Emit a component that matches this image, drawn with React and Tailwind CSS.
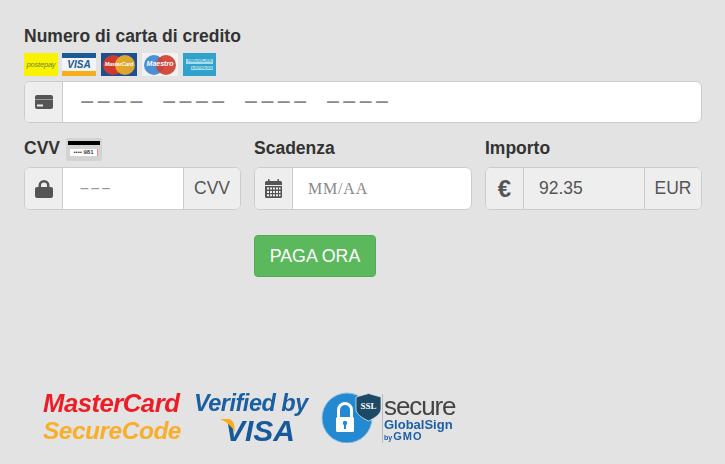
const sans = "font-['Liberation_Sans',Arial,sans-serif]";
const mono = "font-['Liberation_Mono','Courier_New',monospace]";
const serif = "font-['Liberation_Serif','Times_New_Roman',serif]";

function CardIcon() {
  return (
    <svg width="18" height="14" viewBox="0 0 18 14" className="text-[#555]">
      <path
        fill="currentColor"
        fillRule="evenodd"
        d="M2 0h14a2 2 0 0 1 2 2v10a2 2 0 0 1-2 2H2a2 2 0 0 1-2-2V2a2 2 0 0 1 2-2zM2 9.5v2h6v-2z"
      />
      <rect x="0" y="4" width="18" height="1" fill="#eee" opacity="0.45" />
    </svg>
  );
}

function LockIcon() {
  return (
    <svg width="18" height="18" viewBox="0 0 18 18" className="text-[#555]">
      <path
        fill="currentColor"
        fillRule="evenodd"
        d="M3.500 7V5.500a5.500 5.500 0 0 1 11 0V7H16a2 2 0 0 1 2 2v7a2 2 0 0 1-2 2H2a2 2 0 0 1-2-2V9a2 2 0 0 1 2-2zM6 7h6V5.500a3 3 0 0 0-6 0z"
      />
    </svg>
  );
}

function CalendarIcon() {
  return (
    <svg width="17" height="19" viewBox="0 0 17 19" className="text-[#555]">
      <path fill="currentColor" d="M1.500 2H3V0.800a.8.8 0 0 1 1.600 0V2h7.800V0.800a.8.8 0 0 1 1.600 0V2h1.500A1.500 1.500 0 0 1 17 3.500V6H0V3.500A1.500 1.500 0 0 1 1.500 2z" />
      <path
        fill="currentColor"
        fillRule="evenodd"
        d="M0 7h17v10.500a1.500 1.500 0 0 1-1.500 1.500h-14A1.500 1.500 0 0 1 0 17.500zm2 1.500v2h2v-2zm3 0v2h2v-2zm3 0v2h2v-2zm3 0v2h2v-2zm3 0v2h1.500v-2zM2 12v2h2v-2zm3 0v2h2v-2zm3 0v2h2v-2zm3 0v2h2v-2zm3 0v2h1.500v-2zM2 15.300v2h2v-2zm3 0v2h2v-2zm3 0v2h2v-2zm3 0v2h2v-2zm3 0v2h1.500v-2z"
      />
    </svg>
  );
}

function Postepay() {
  return (
    <div className="flex h-[23px] w-[34px] items-center justify-center bg-[#f9f200] text-[7.5px] italic tracking-[-0.2px] text-[#6b8a3a]">
      postepay
    </div>
  );
}

function VisaCard() {
  return (
    <div className="flex h-[23px] w-[34px] flex-col bg-[#f4f4f4]">
      <div className="h-[5px] bg-[#1a5a96]" />
      <div className="flex flex-1 items-center justify-center text-[10px] font-bold italic leading-none text-[#1a5a96]">
        VISA
      </div>
      <div className="h-[5px] bg-[#f7ae1a]" />
    </div>
  );
}

function Circles({ left, right, label, size }) {
  return (
    <div className="relative h-[20px] w-[32px]">
      <svg width="32" height="20" viewBox="0 0 32 20" className="absolute inset-0">
        <circle cx="10" cy="10" r="10" fill={left} />
        <circle cx="22" cy="10" r="10" fill={right} opacity="0.92" />
      </svg>
      <span className={`absolute inset-0 flex items-center justify-center font-bold italic text-white ${size}`}>
        {label}
      </span>
    </div>
  );
}

function Amex() {
  return (
    <div className="flex h-[23px] w-[33px] flex-col justify-center gap-[2px] bg-[#2fa3cc] px-[3px] text-[4.500px] font-bold leading-none text-[#2fa3cc]">
      <span className="bg-[#a8dcec] text-center">AMERICAN</span>
      <span className="ml-[5px] bg-[#a8dcec] text-center">EXPRESS</span>
    </div>
  );
}

function Addon({ children, side = "left", wide = false }) {
  const border = side === "left" ? "border-r" : "border-l";
  return (
    <div className={`flex shrink-0 items-center justify-center border-[#ccc] bg-[#eee] text-[#555] ${border} ${wide ? "w-[57px]" : "w-[38px]"}`}>
      {children}
    </div>
  );
}

function Group({ children, className = "" }) {
  return (
    <div className={`flex overflow-hidden rounded-[6px] border border-[#ccc] bg-white ${className}`}>
      {children}
    </div>
  );
}

function Field({ label, extra, width, children }) {
  return (
    <div className={`flex flex-col ${width}`}>
      <div className="mb-[2px] flex h-[32px] items-center gap-[6px] text-[17.500px] font-bold leading-none text-[#333]">
        {label}
        {extra}
      </div>
      {children}
    </div>
  );
}

function CvvCard() {
  return (
    <div className="flex h-[23px] w-[36px] flex-col items-center rounded-[2px] bg-[#d3d3d3] pt-[3px]">
      <div className="h-[4px] w-[32px] bg-black" />
      <div className="mt-[4px] flex h-[7px] w-[28px] items-center justify-center border-r border-[#e88] bg-white text-[6px] font-bold leading-none text-[#444]">
        •••• 981
      </div>
    </div>
  );
}

function ShieldLock() {
  return (
    <svg width="61" height="52" viewBox="0 0 61 52" className="shrink-0">
      <circle cx="26" cy="27" r="25" fill="#2389d0" />
      <circle cx="26" cy="27" r="25" fill="none" stroke="#8fc0e4" strokeWidth="1" />
      <path d="M17.500 27v-8a6.500 6.500 0 0 1 13 0v8" fill="none" stroke="#fff" strokeWidth="3" />
      <rect x="15" y="26" width="18" height="15" rx="1.500" fill="#fff" />
      <circle cx="24" cy="32" r="2.200" fill="#2389d0" />
      <rect x="23" y="33" width="2" height="5" fill="#2389d0" />
      <path d="M35 6l12.500-3.500L60 6v12c0 5-6 9-12.500 12C41 27 35 23 35 18z" fill="#1c4a66" stroke="#e3e3e3" strokeWidth="0.8" />
      <text x="47.500" y="18" textAnchor="middle" fontSize="9" fontWeight="700" fill="#fff" fontFamily="Liberation Serif, serif">
        SSL
      </text>
    </svg>
  );
}

export default function App() {
  return (
    <div className={`flex h-[464px] w-[725px] flex-col overflow-hidden bg-[#e3e3e3] pl-6 pr-[23px] pt-[22px] ${sans}`}>
      <div className="flex h-[30px] items-center text-[17.500px] font-bold leading-none text-[#333]">
        Numero di carta di credito
      </div>
      <div className="mt-px flex items-center">
        <Postepay />
        <div className="ml-[4px]">
          <VisaCard />
        </div>
        <div className="ml-[5px] flex h-[23px] w-[36px] items-center justify-center bg-[#1f4f93]">
          <Circles left="#cf3a2e" right="#eeae25" label="MasterCard" size="text-[5.500px] tracking-[-0.2px]" />
        </div>
        <div className="ml-[5px] flex h-[23px] w-[36px] items-center justify-center bg-[#f1f1f1]">
          <Circles left="#4b8fd6" right="#cf4030" label="Maestro" size="text-[7px]" />
        </div>
        <div className="ml-[5px]">
          <Amex />
        </div>
      </div>

      <Group className="mt-[5px] h-[42px] w-[678px]">
        <Addon>
          <CardIcon />
        </Addon>
        <div className={`flex flex-1 items-center pl-[16px] text-[27.300px] text-[#888] ${mono}`}>
          ––––&nbsp;––––&nbsp;––––&nbsp;––––
        </div>
      </Group>

      <div className="mt-[10px] flex">
        <Field label="CVV" extra={<CvvCard />} width="w-[217px]">
          <Group className="h-[43px]">
            <Addon>
              <LockIcon />
            </Addon>
            <div className={`flex flex-1 items-center pl-[16px] text-[18px] text-[#999] ${mono}`}>–––</div>
            <Addon side="right" wide>
              <span className="text-[17.500px]">CVV</span>
            </Addon>
          </Group>
        </Field>
        <div className="ml-[13px]">
          <Field label="Scadenza" width="w-[218px]">
            <Group className="h-[43px]">
              <Addon>
                <CalendarIcon />
              </Addon>
              <div className={`flex flex-1 items-center pl-[15px] text-[16px] tracking-[0.8px] text-[#888] ${serif}`}>MM/AA</div>
            </Group>
          </Field>
        </div>
        <div className="ml-[13px]">
          <Field label="Importo" width="w-[217px]">
            <Group className="h-[43px]">
              <Addon>
                <span className="text-[24px] font-bold leading-none">€</span>
              </Addon>
              <div className="flex flex-1 items-center bg-[#eee] pl-[15px] text-[17.500px] text-[#555]">92.35</div>
              <Addon side="right" wide>
                <span className="text-[17.500px]">EUR</span>
              </Addon>
            </Group>
          </Field>
        </div>
      </div>

      <div className="mt-[25px] pl-[230px]">
        <button
          type="button"
          className="flex h-[42px] w-[122px] items-center justify-center rounded-[4px] border border-[#4cae4c] bg-[#5cb85c] text-[17.800px] text-white"
        >
          PAGA ORA
        </button>
      </div>

      <div className="mt-[113px] flex items-center pl-[19px]">
        <div className="flex w-[151px] shrink-0 flex-col font-bold italic leading-[27px] tracking-[-0.5px] blur-[0.3px]">
          <span className="text-[25.700px] text-[#ee1c25]">MasterCard</span>
          <span className="text-[24.500px] text-[#f9ae2a]">SecureCode</span>
        </div>
        <div className="relative flex w-[127px] shrink-0 flex-col items-start font-bold italic leading-[27px] text-[#1a5fa3] blur-[0.3px]">
          <span className="text-[23.500px] tracking-[-0.5px]">Verified by</span>
          <span className="ml-[31px] text-[30px] text-[#17599b]">VISA</span>
          <svg width="16" height="14" viewBox="0 0 16 14" className="absolute left-[26px] top-[29px]">
            <path d="M0 0h8c3 0 5 2 6 5l1 8C12 8 7 3 0 0z" fill="#f7ae1a" />
          </svg>
        </div>
        <ShieldLock />
        <div className="mt-[2px] flex flex-col border-l border-[#bbb] pl-[1px] blur-[0.2px]">
          <span className="text-[26px] leading-[25px] tracking-[-1.100px] text-[#444]">secure</span>
          <span className="text-[13px] font-bold leading-[12px] text-[#1a5fa8]">GlobalSign</span>
          <span className="flex items-baseline gap-[1px] font-bold leading-[10px] text-[#1a5fa8]">
            <span className="text-[7px]">by</span>
            <span className="text-[11px] tracking-[1px]">GMO</span>
          </span>
        </div>
      </div>
    </div>
  );
}
